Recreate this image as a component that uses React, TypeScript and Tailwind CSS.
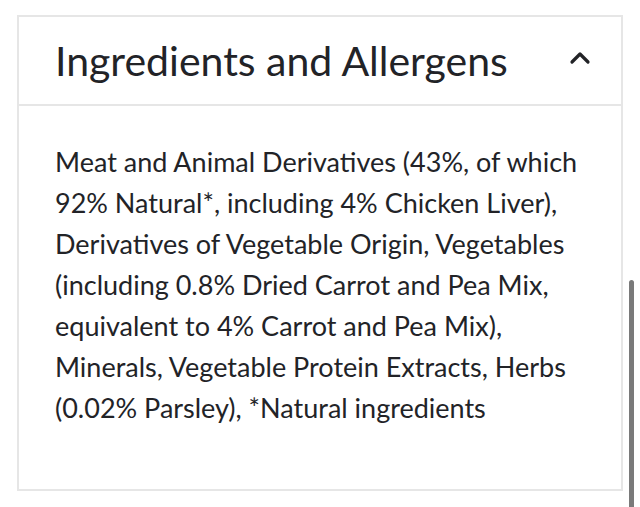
export default function App() {
  return (
    <div
      className="relative h-[507px] w-[640px] overflow-hidden bg-white pt-[15px] pl-[17px] pr-[17px]"
      style={{ fontFamily: 'Lato, "Noto Sans", sans-serif' }}
    >
      <div className="border-2 border-[#e6e6e6] border-b-0 w-[606px]">
        <div className="flex h-[89px] items-center justify-between border-b-2 border-[#e6e6e6] pl-[36px] pr-[30px]">
          <h2 className="text-[41px] leading-none text-[#222327]">Ingredients and Allergens</h2>
          <svg width="22" height="14" viewBox="0 0 22 14" fill="none" className="mt-[-6px]">
            <path d="M3 11 L11 3 L19 11" stroke="#222327" strokeWidth="3.2" strokeLinecap="round" strokeLinejoin="round" />
          </svg>
        </div>
        <div className="border-b-2 border-[#e6e6e6] pl-[36px] pr-[10px] pt-[35px] pb-[61px]">
          <p className="text-[27px] leading-[41px] text-[#222327]">
            Meat and Animal Derivatives (43%, of which
            <br />
            92% Natural*, including 4% Chicken Liver),
            <br />
            Derivatives of Vegetable Origin, Vegetables
            <br />
            (including 0.8% Dried Carrot and Pea Mix,
            <br />
            equivalent to 4% Carrot and Pea Mix),
            <br />
            Minerals, Vegetable Protein Extracts, Herbs
            <br />
            (0.02% Parsley), *Natural ingredients
          </p>
        </div>
      </div>
      <div className="absolute right-[6px] top-[280px] h-[240px] w-[5px] rounded-full bg-[#7a7a7a]" />
    </div>
  );
}
